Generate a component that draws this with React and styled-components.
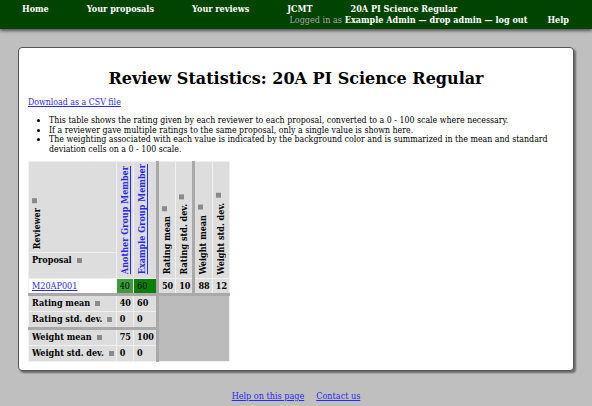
import React from "react";
import styled, { createGlobalStyle } from "styled-components";

const GlobalStyle = createGlobalStyle`
  html, body { margin: 0; padding: 0; }
  body {
    background: #bfbfbf;
    font-family: "DejaVu Serif Condensed", "DejaVu Serif", serif;
    font-stretch: condensed;
    font-size: 9px;
    color: #000;
  }
  a { color: #2a2aee; }
`;

const NavBar = styled.nav`
  background: #004400;
  height: 29px;
  box-sizing: border-box;
  padding: 4px 23px 0 22px;
  box-shadow: 0 2px 3px rgba(0, 0, 0, 0.55);
  color: #fff;
  font-weight: bold;
  font-size: 9px;
  line-height: 10.5px;
`;

const NavRow = styled.div`
  display: flex;
  gap: ${(p) => p.$gap}px;
  justify-content: ${(p) => (p.$end ? "flex-end" : "flex-start")};
`;

const Muted = styled.span`
  color: #a8a8a8;
  font-weight: normal;
`;

const Main = styled.main`
  margin: 18px 18px 0;
`;

const Panel = styled.section`
  background: #fff;
  border: 1px solid #555;
  border-radius: 4px;
  box-shadow: 2px 2px 2px rgba(0, 0, 0, 0.45);
  padding: 9px 9px 8px;
`;

const Title = styled.h1`
  font-family: "DejaVu Serif", serif;
  font-stretch: normal;
  font-size: 16px;
  text-align: center;
  margin: 12px 0 9px;
`;

const Para = styled.p`
  margin: 0 0 9px;
  font-size: 8.75px;
  line-height: 10px;
`;

const Notes = styled.ul`
  margin: 0 0 7px;
  padding-left: 21px;
  font-size: 8.75px;
  line-height: 9.6px;
`;

const Table = styled.table`
  border-collapse: collapse;
  font-weight: bold;
  line-height: 10px;
`;

const Cell = styled.td`
  background: ${(p) => p.$bg || "#dddddd"};
  border: 1px solid #f0f0f0;
  border-left: ${(p) => (p.$group ? "3px solid #a9a9a9" : "1px solid #f0f0f0")};
  border-top: ${(p) => (p.$top ? "3px solid #a9a9a9" : "1px solid #f0f0f0")};
  padding: 2px 2px 2px 3px;
  height: ${(p) => p.$h || 11}px;
  text-align: left;
  vertical-align: ${(p) => p.$valign || "middle"};
  font-weight: ${(p) => (p.$plain ? "normal" : "bold")};
  white-space: nowrap;
`;

const Vertical = styled.div`
  writing-mode: vertical-rl;
  transform: rotate(180deg);
  white-space: nowrap;
  line-height: 11px;
  padding: 1px 0 0;
`;

const SortIcon = styled.span`
  display: inline-block;
  width: 5px;
  height: 5px;
  background: #8a8a8a;
  margin-inline-start: 5px;
  vertical-align: middle;
`;

const Footer = styled.footer`
  display: flex;
  justify-content: center;
  gap: 12px;
  margin-top: 20px;
`;

const Th = (props) => <Cell as="th" {...props} />;

export default function App() {
  return (
    <>
      <GlobalStyle />
      <NavBar>
        <NavRow $gap={38}>
          <span>Home</span>
          <span>Your proposals</span>
          <span>Your reviews</span>
          <span>JCMT</span>
          <span>20A PI Science Regular</span>
        </NavRow>
        <NavRow $gap={20} $end>
          <span>
            <Muted>Logged in as</Muted> Example Admin — drop admin — log out
          </span>
          <span>Help</span>
        </NavRow>
      </NavBar>
      <Main>
        <Panel>
          <Title>Review Statistics: 20A PI Science Regular</Title>
          <Para>
            <a href="#">Download as a CSV file</a>
          </Para>
          <Notes>
            <li>
              This table shows the rating given by each reviewer to each proposal,
              converted to a 0 - 100 scale where necessary.
            </li>
            <li>
              If a reviewer gave multiple ratings to the same proposal, only a
              single value is shown here.
            </li>
            <li>
              The weighting associated with each value is indicated by the
              background color and is summarized in the mean and standard
              deviation cells on a 0 - 100 scale.
            </li>
          </Notes>
          <Table>
            <thead>
              <tr>
                <Th $valign="bottom" $h={80}>
                  <Vertical>
                    Reviewer<SortIcon />
                  </Vertical>
                </Th>
                <Th rowSpan={2} $valign="bottom">
                  <Vertical>
                    <a href="#">Another Group Member</a>
                  </Vertical>
                </Th>
                <Th rowSpan={2} $valign="bottom">
                  <Vertical>
                    <a href="#">Example Group Member</a>
                  </Vertical>
                </Th>
                <Th rowSpan={2} $valign="bottom" $group>
                  <Vertical>
                    Rating mean<SortIcon />
                  </Vertical>
                </Th>
                <Th rowSpan={2} $valign="bottom">
                  <Vertical>
                    Rating std. dev.<SortIcon />
                  </Vertical>
                </Th>
                <Th rowSpan={2} $valign="bottom" $group>
                  <Vertical>
                    Weight mean<SortIcon />
                  </Vertical>
                </Th>
                <Th rowSpan={2} $valign="bottom">
                  <Vertical>
                    Weight std. dev.<SortIcon />
                  </Vertical>
                </Th>
              </tr>
              <tr>
                <Th $valign="top" $h={19}>
                  Proposal<SortIcon />
                </Th>
              </tr>
            </thead>
            <tbody>
              <tr>
                <Cell $bg="#fff" $plain $h={10}>
                  <a href="#">M20AP001</a>
                </Cell>
                <Cell $bg="#3d9c3d" $plain $h={10}>40</Cell>
                <Cell $bg="#0a7f0a" $plain $h={10}>60</Cell>
                <Cell $group $h={10}>50</Cell>
                <Cell $h={10}>10</Cell>
                <Cell $group $h={10}>88</Cell>
                <Cell $h={10}>12</Cell>
              </tr>
              <tr>
                <Th $top>
                  Rating mean<SortIcon />
                </Th>
                <Cell $top>40</Cell>
                <Cell $top>60</Cell>
                <Cell $top $group $bg="#bbbbbb" rowSpan={4} colSpan={4} />
              </tr>
              <tr>
                <Th>
                  Rating std. dev.<SortIcon />
                </Th>
                <Cell>0</Cell>
                <Cell>0</Cell>
              </tr>
              <tr>
                <Th $top>
                  Weight mean<SortIcon />
                </Th>
                <Cell $top>75</Cell>
                <Cell $top>100</Cell>
              </tr>
              <tr>
                <Th>
                  Weight std. dev.<SortIcon />
                </Th>
                <Cell>0</Cell>
                <Cell>0</Cell>
              </tr>
            </tbody>
          </Table>
        </Panel>
      </Main>
      <Footer>
        <a href="#">Help on this page</a>
        <a href="#">Contact us</a>
      </Footer>
    </>
  );
}
